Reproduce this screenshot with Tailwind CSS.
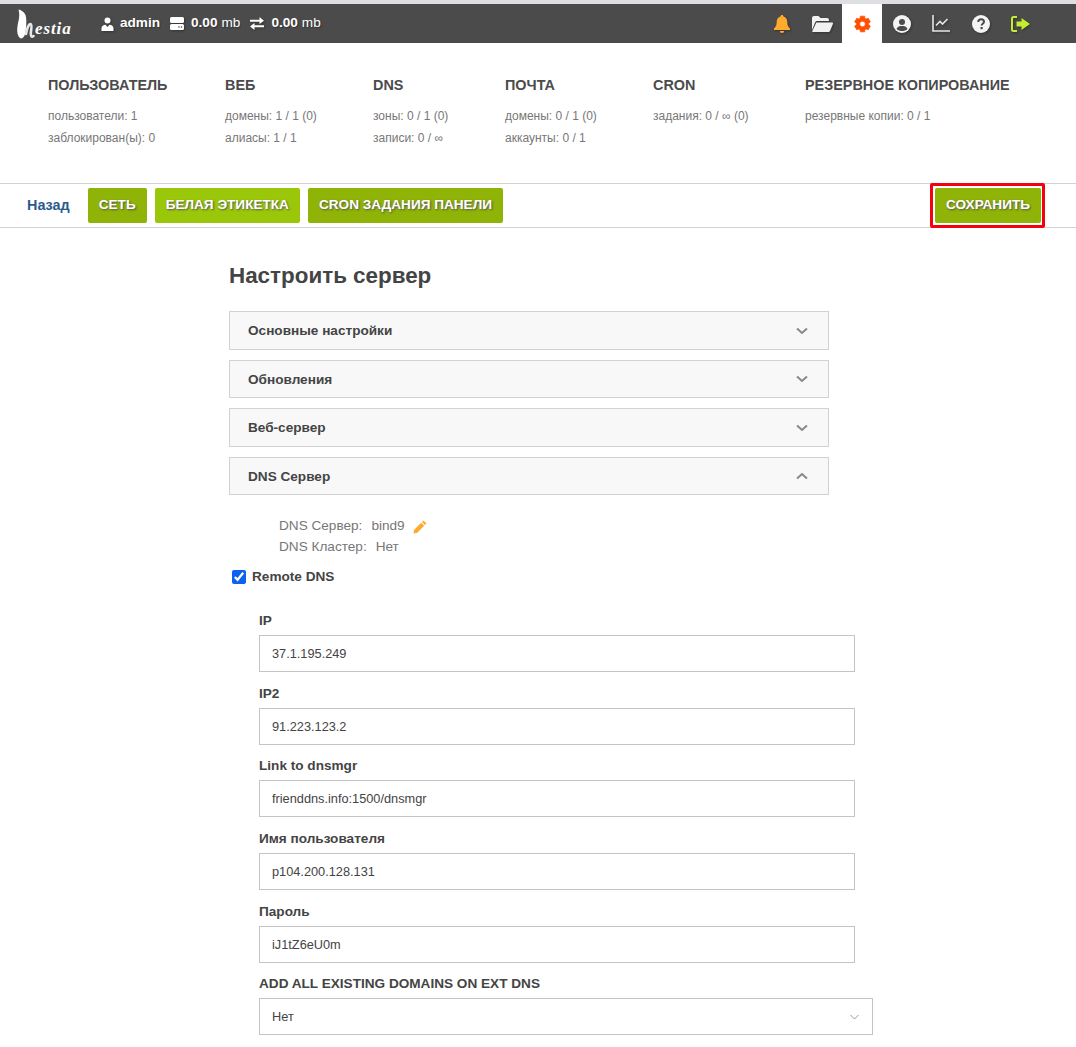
<!DOCTYPE html>
<html lang="ru">

<head>
  <meta charset="UTF-8">
  <meta name="viewport" content="width=device-width, initial-scale=1.0">
  <title>Hestia</title>
  <script src="https://cdn.jsdelivr.net/npm/@tailwindcss/browser@4"></script>
</head>

<body class="bg-white font-['Liberation_Sans',Arial,sans-serif] text-[#4b4b4b] h-[1047px] overflow-hidden">
  <!-- top bar -->
  <div class="h-[4px] bg-[#dfdfe3]"></div>
  <div class="h-[39px] bg-[#4b4b4b] flex items-center pl-[16px] text-white text-[13.6px]">
    <div class="w-[57px] h-[39px] relative shrink-0">
      <svg class="absolute left-0 top-[5px]" width="20" height="30" viewBox="0 0 20 30">
        <path d="M2.5 0.5C5 1 8 2.5 9.5 6C10.500 9 10.500 14 10 19C9.500 24 9 27.5 6.500 29C5 30 3 29 2 26C0.5 22 1.5 16 2.5 12C3.5 8 3.5 4 2.5 0.5Z" fill="#fff" />
        <path d="M10 25C11 19 13 14.5 14.500 15C16.500 15.500 15 21 14.800 24C14.600 27 15.500 28.500 17.500 27" fill="none" stroke="#e8e8e8" stroke-width="2.6" stroke-linecap="round" />
      </svg>
      <span class="absolute left-[19px] top-[15px] font-['Liberation_Serif',serif] italic font-bold text-[17px] leading-[20px] tracking-[0.9px]">estia</span>
    </div>
    <svg class="ml-[28px] drop-shadow-[1px_1px_1px_#333]" width="13" height="14" viewBox="0 0 13 14" fill="#fff">
      <circle cx="6.5" cy="3.5" r="3" />
      <path d="M0.5 14V11C0.5 9 2.5 8 4.5 7.8L6.5 10L8.5 7.8C10.5 8 12.5 9 12.5 11V14Z" />
    </svg>
    <span class="ml-[6px] font-bold [text-shadow:1px_1px_1px_#333]">admin</span>
    <svg class="ml-[10px] drop-shadow-[1px_1px_1px_#333]" width="14" height="13" viewBox="0 0 14 13" fill="#fff">
      <rect x="0" y="0" width="14" height="6" rx="1.5" />
      <path d="M1.5 7H12.5A1.5 1.5 0 0 1 14 8.5V11.5A1.5 1.5 0 0 1 12.5 13H1.5A1.5 1.5 0 0 1 0 11.5V8.5A1.5 1.5 0 0 1 1.5 7Z" />
      <circle cx="9" cy="10" r="0.8" fill="#4b4b4b" />
      <circle cx="11.5" cy="10" r="0.8" fill="#4b4b4b" />
    </svg>
    <span class="ml-[7px] font-bold [text-shadow:1px_1px_1px_#333]">0.00</span>
    <span class="ml-[4px] [text-shadow:1px_1px_1px_#333]">mb</span>
    <svg class="ml-[10px] drop-shadow-[1px_1px_1px_#333]" width="14" height="13" viewBox="0 0 14 13" fill="#fff">
      <path d="M0 2.8H9.5V0L14 3.8L9.5 7V4.8H0Z" />
      <path d="M14 8.3H4.5V6L0 9.5L4.5 13V10.3H14Z" />
    </svg>
    <span class="ml-[7px] font-bold [text-shadow:1px_1px_1px_#333]">0.00</span>
    <span class="ml-[4px] [text-shadow:1px_1px_1px_#333]">mb</span>

    <div class="ml-auto flex items-center h-full mr-[36px]">
      <div class="w-[40px] h-full flex items-center justify-center">
        <svg class="drop-shadow-[1px_1px_1px_#333]" width="16" height="18" viewBox="0 0 16 18" fill="#fdaa2f">
          <path d="M8 0C9 0 9.5 0.7 9.5 1.5C12 2.2 13.3 4.3 13.3 7C13.3 10.5 14.3 12 16 13.5V15H0V13.5C1.7 12 2.7 10.5 2.7 7C2.7 4.3 4 2.2 6.5 1.5C6.5 0.7 7 0 8 0Z" />
          <path d="M5.8 16H10.2A2.2 2 0 0 1 5.8 16Z" />
        </svg>
      </div>
      <div class="w-[40px] h-full flex items-center justify-center">
        <svg class="drop-shadow-[1px_1px_1px_#333]" width="21" height="16" viewBox="0 0 21 16" fill="#f1f1f1">
          <path d="M0 14V2A2 2 0 0 1 2 0H6.5L8.5 2H15A2 2 0 0 1 17 4V5H5.5C4.3 5 3.6 5.5 3.1 6.5Z" />
          <path d="M4.3 6.5H20C20.8 6.5 21.2 7.2 20.9 8L18 15C17.7 15.7 17.2 16 16.5 16H1C0.4 16 0.1 15.5 0.4 15Z" />
        </svg>
      </div>
      <div class="w-[40px] h-full bg-white flex items-center justify-center">
        <svg width="17" height="18" viewBox="0 0 24 24" fill="#ff4f00" stroke="#ff4f00" stroke-width="1" stroke-linejoin="round">
          <path fill-rule="evenodd" d="M9.02 0.89L14.98 0.89L15.59 4.3L16.88 5.04L20.13 3.87L23.11 9.02L20.47 11.26L20.47 12.74L23.11 14.98L20.13 20.13L16.88 18.96L15.59 19.7L14.98 23.11L9.02 23.11L8.41 19.7L7.12 18.96L3.87 20.13L0.89 14.98L3.53 12.74L3.53 11.26L0.89 9.02L3.87 3.87L7.12 5.04L8.41 4.3ZM12 8A4 4 0 1 0 12 16A4 4 0 1 0 12 8Z" />
        </svg>
      </div>
      <div class="w-[39px] h-full flex items-center justify-center">
        <svg class="drop-shadow-[1px_1px_1px_#333]" width="18" height="18" viewBox="0 0 18 18">
          <circle cx="9" cy="9" r="9" fill="#f4f4f4" />
          <circle cx="9" cy="7" r="3" fill="#4b4b4b" />
          <path d="M3.5 14C4.5 11.5 6.5 11 9 11C11.5 11 13.5 11.5 14.5 14C13 15.5 11 16 9 16C7 16 5 15.5 3.5 14Z" fill="#4b4b4b" />
        </svg>
      </div>
      <div class="w-[40px] h-full flex items-center justify-center">
        <svg class="drop-shadow-[1px_1px_1px_#333]" width="18" height="17" viewBox="0 0 18 17" fill="none" stroke="#e6e6e6">
          <path d="M1 0V16H18" stroke-width="1.6" />
          <path d="M4 10.5L8 6.5L10.5 9L15.5 4" stroke-width="1.6" />
        </svg>
      </div>
      <div class="w-[39px] h-full flex items-center justify-center">
        <svg class="drop-shadow-[1px_1px_1px_#333]" width="18" height="18" viewBox="0 0 18 18">
          <circle cx="9" cy="9" r="9" fill="#f4f4f4" />
          <path d="M6.2 7C6.3 5.3 7.5 4.3 9.1 4.3C10.8 4.3 12 5.3 12 6.8C12 8.8 9.6 8.8 9.6 10.5" fill="none" stroke="#4b4b4b" stroke-width="2" />
          <rect x="8.5" y="12" width="2.2" height="2.2" fill="#4b4b4b" />
        </svg>
      </div>
      <div class="w-[40px] h-full flex items-center justify-center">
        <svg class="drop-shadow-[1px_1px_1px_#333]" width="19" height="16" viewBox="0 0 19 16">
          <path d="M6 1H2.5A1.5 1.5 0 0 0 1 2.5V13.5A1.5 1.5 0 0 0 2.5 15H6" fill="none" stroke="#c3ed2e" stroke-width="2" />
          <path d="M5.5 5.5H10.5V2L19 8L10.5 14V10.5H5.5Z" fill="#c3ed2e" />
        </svg>
      </div>
    </div>
  </div>

  <!-- stats -->
  <div class="h-[141px] border-b border-[#d2d2d2] pt-[34px] pl-[48px] flex text-[12px] text-[#777]">
    <div class="w-[177px]">
      <h2 class="font-bold text-[14.4px] leading-[17px] text-[#4b4b4b] mb-[11px]">ПОЛЬЗОВАТЕЛЬ</h2>
      <p class="leading-[22px]">пользователи: 1</p>
      <p class="leading-[22px]">заблокирован(ы): 0</p>
    </div>
    <div class="w-[148px]">
      <h2 class="font-bold text-[14.4px] leading-[17px] text-[#4b4b4b] mb-[11px]">ВЕБ</h2>
      <p class="leading-[22px]">домены: 1 / 1 (0)</p>
      <p class="leading-[22px]">алиасы: 1 / 1</p>
    </div>
    <div class="w-[132px]">
      <h2 class="font-bold text-[14.4px] leading-[17px] text-[#4b4b4b] mb-[11px]">DNS</h2>
      <p class="leading-[22px]">зоны: 0 / 1 (0)</p>
      <p class="leading-[22px]">записи: 0 / ∞</p>
    </div>
    <div class="w-[148px]">
      <h2 class="font-bold text-[14.4px] leading-[17px] text-[#4b4b4b] mb-[11px]">ПОЧТА</h2>
      <p class="leading-[22px]">домены: 0 / 1 (0)</p>
      <p class="leading-[22px]">аккаунты: 0 / 1</p>
    </div>
    <div class="w-[152px]">
      <h2 class="font-bold text-[14.4px] leading-[17px] text-[#4b4b4b] mb-[11px]">CRON</h2>
      <p class="leading-[22px]">задания: 0 / ∞ (0)</p>
    </div>
    <div>
      <h2 class="font-bold text-[14.4px] leading-[17px] text-[#4b4b4b] mb-[11px]">РЕЗЕРВНОЕ КОПИРОВАНИЕ</h2>
      <p class="leading-[22px]">резервные копии: 0 / 1</p>
    </div>
  </div>

  <!-- toolbar -->
  <div class="h-[44px] border-b border-[#d2d2d2] flex items-center pl-[27px] pr-[31px] relative">
    <a class="font-bold text-[14.4px] text-[#2c5a8f] mr-[18px]">Назад</a>
    <a class="h-[35px] px-[11px] flex items-center bg-[#8fb306] rounded-[2px] text-white font-bold text-[13.6px] [text-shadow:1px_1px_2px_#555] mr-[8px]">СЕТЬ</a>
    <a class="h-[35px] px-[11px] flex items-center bg-[#9bc70a] rounded-[2px] text-white font-bold text-[13.6px] [text-shadow:1px_1px_2px_#555] mr-[8px]">БЕЛАЯ ЭТИКЕТКА</a>
    <a class="h-[35px] px-[11px] flex items-center bg-[#8fb306] rounded-[2px] text-white font-bold text-[13.6px] [text-shadow:1px_1px_2px_#555]">CRON ЗАДАНИЯ ПАНЕЛИ</a>
    <div class="ml-auto border-[3px] border-[#f4000f] rounded-[2px] py-[2px] pl-[2px] pr-[1px] -mt-[1px]">
      <a class="h-[35px] pl-[11px] pr-[11px] flex items-center bg-[#8fb306] rounded-[2px] text-white font-bold text-[13.6px] [text-shadow:1px_1px_2px_#555]">СОХРАНИТЬ</a>
    </div>
  </div>

  <!-- form -->
  <div class="pl-[229px] pt-[35px]">
    <h1 class="text-[22.4px] leading-[26px] font-bold text-[#444] mb-[22px]">Настроить сервер</h1>

    <div class="w-[600px] flex flex-col">
      <div class="h-[39px] mb-[10px] border border-[#d2d2d2] bg-[#f8f8f8] flex items-center justify-between pl-[18px] pr-[20px] text-[13.6px] font-bold text-[#444]">
        <span class="pt-[2px]">Основные настройки</span>
        <svg width="12" height="8" viewBox="0 0 12 8" fill="none" stroke="#888" stroke-width="2"><path d="M1 1.5L6 6L11 1.5" /></svg>
      </div>
      <div class="h-[38px] mb-[10px] border border-[#d2d2d2] bg-[#f8f8f8] flex items-center justify-between pl-[18px] pr-[20px] text-[13.6px] font-bold text-[#444]">
        <span class="pt-[2px]">Обновления</span>
        <svg width="12" height="8" viewBox="0 0 12 8" fill="none" stroke="#888" stroke-width="2"><path d="M1 1.5L6 6L11 1.5" /></svg>
      </div>
      <div class="h-[39px] mb-[10px] border border-[#d2d2d2] bg-[#f8f8f8] flex items-center justify-between pl-[18px] pr-[20px] text-[13.6px] font-bold text-[#444]">
        <span class="pt-[1px]">Веб-сервер</span>
        <svg width="12" height="8" viewBox="0 0 12 8" fill="none" stroke="#888" stroke-width="2"><path d="M1 1.5L6 6L11 1.5" /></svg>
      </div>
      <div class="h-[38px] border border-[#d2d2d2] bg-[#f8f8f8] flex items-center justify-between pl-[18px] pr-[20px] text-[13.6px] font-bold text-[#444]">
        <span class="pt-[2px]">DNS Сервер</span>
        <svg width="12" height="8" viewBox="0 0 12 8" fill="none" stroke="#888" stroke-width="2"><path d="M1 6.5L6 2L11 6.5" /></svg>
      </div>
    </div>

    <div class="pl-[50px] pt-[21px] text-[13.6px] text-[#777]">
      <div class="h-[21px] flex items-center">
        <span>DNS Сервер:</span><span class="ml-[9px]">bind9</span>
        <svg class="ml-[8px]" width="14" height="14" viewBox="0 0 14 14" fill="#fdaa2f"><path d="M10.5 0.5L13.5 3.5L12 5L9 2ZM8.2 2.8L11.2 5.8L4 13L0.5 13.5L1 10Z" /></svg>
      </div>
      <div class="h-[21px] flex items-center">
        <span>DNS Кластер:</span><span class="ml-[9px]">Нет</span>
      </div>
    </div>

    <label class="flex items-center h-[20px] mt-[9px] pl-[3px] text-[13.6px] font-bold text-[#444]">
      <input type="checkbox" checked class="w-[14px] h-[14px] m-0 accent-[#0a63f0]">
      <span class="ml-[6px]">Remote DNS</span>
    </label>

    <div class="pl-[30px] pt-[26px] text-[13.6px] text-[#444]">
      <label class="block font-bold leading-[16px] mb-[6px]">IP</label>
      <input type="text" value="37.1.195.249" class="block w-[596px] h-[37px] border border-[#c4c4c4] px-[12px] text-[12.75px] text-[#444] mb-[14px]">

      <label class="block font-bold leading-[16px] mb-[6px]">IP2</label>
      <input type="text" value="91.223.123.2" class="block w-[596px] h-[37px] border border-[#c4c4c4] px-[12px] text-[12.75px] text-[#444] mb-[13px]">

      <label class="block font-bold leading-[16px] mb-[6px]">Link to dnsmgr</label>
      <input type="text" value="frienddns.info:1500/dnsmgr" class="block w-[596px] h-[37px] border border-[#c4c4c4] px-[12px] text-[12.75px] text-[#444] mb-[14px]">

      <label class="block font-bold leading-[16px] mb-[6px]">Имя пользователя</label>
      <input type="text" value="p104.200.128.131" class="block w-[596px] h-[37px] border border-[#c4c4c4] px-[12px] text-[12.75px] text-[#444] mb-[14px]">

      <label class="block font-bold leading-[15px] mb-[7px]">Пароль</label>
      <input type="text" value="iJ1tZ6eU0m" class="block w-[596px] h-[37px] border border-[#c4c4c4] px-[12px] text-[12.75px] text-[#444] mb-[13px]">

      <label class="block font-bold leading-[16px] mb-[6px]">ADD ALL EXISTING DOMAINS ON EXT DNS</label>
      <div class="w-[614px] h-[37px] border border-[#c4c4c4] pl-[12px] pr-[13px] flex items-center justify-between text-[12.75px]">
        <span>Нет</span>
        <svg width="9" height="6" viewBox="0 0 9 6" fill="none" stroke="#999"><path d="M0.5 1L4.5 5L8.5 1" /></svg>
      </div>
    </div>
  </div>
</body>

</html>
